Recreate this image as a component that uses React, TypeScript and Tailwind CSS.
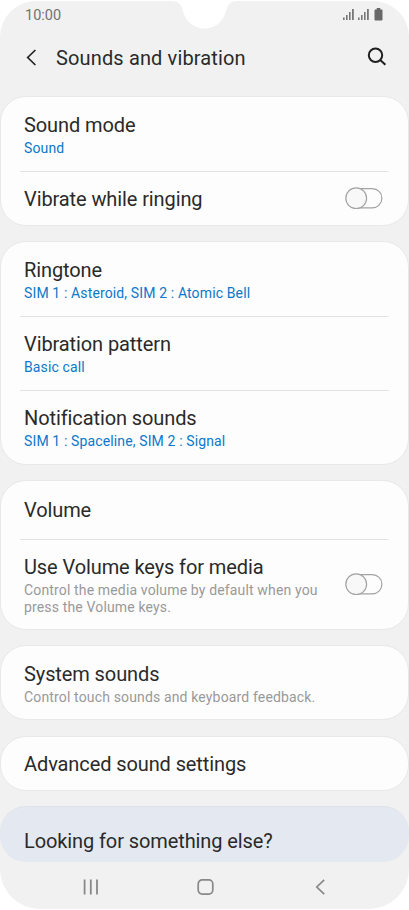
import React, { useState } from "react";

interface SettingRowProps {
    title: string;
    value?: string;
    description?: string;
    className: string;
    children?: React.ReactNode;
}

function SettingRow({ title, value, description, className, children }: SettingRowProps) {
    return (
        <div className={`flex justify-between pl-[23px] pr-[25px] ${className}`}>
            <div className="whitespace-nowrap">
                <h2 className="text-[20px] leading-6 tracking-[-0.1px] text-[#2a2a2a]">{title}</h2>
                {value && (
                    <p className="text-[14px] leading-[17px] tracking-[0.13px] mt-[3px] text-[#0b78cb]">{value}</p>
                )}
                {description && (
                    <p className="text-[14px] leading-[17px] tracking-[0.15px] mt-[3px] text-[#999999] whitespace-pre-line">
                        {description}
                    </p>
                )}
            </div>
            {children}
        </div>
    );
}

function Card({ className, children }: { className: string; children: React.ReactNode }) {
    return (
        <section className={`shrink-0 rounded-[26px] border border-[#e8e8e8] bg-[#fdfdfd] overflow-hidden ${className}`}>
            {children}
        </section>
    );
}

function Divider() {
    return <div className="h-px mx-[19px] bg-[#e3e3e3]" />;
}

function Toggle({ label }: { label: string }) {
    const [on, setOn] = useState(false);

    return (
        <button role="switch" aria-checked={on} aria-label={label} onClick={() => setOn(!on)} className="h-[22px]">
            <svg width="38" height="22" viewBox="0 0 38 22" fill="#fdfdfd" stroke="#a3a3a3" strokeWidth="1.2">
                <rect x="1.5" y="1.6" width="35.4" height="19.3" rx="9.65" />
                <circle cx={on ? 26.7 : 11.2} cy="11.2" r="10.4" fill="#f8f8f8" />
            </svg>
        </button>
    );
}

function Signal() {
    return (
        <svg width="11" height="12" viewBox="0 0 11 12" fill="#777777">
            <path d="M0 9.5h1.6V12H0zM3 7h1.6v5H3zM6 4h1.6v8H6zM9 1h1.8v11H9z" />
        </svg>
    );
}

function StatusBar() {
    return (
        <div className="relative h-[28px] shrink-0">
            {/* camera cutout */}
            <svg className="absolute left-[170px] top-0" width="69" height="28" viewBox="0 0 69 28" fill="#ffffff">
                <path d="M0 0C9 0 11 3 13 10C16 21 24 27.5 34.5 27.5C45 27.5 53 21 56 10C58 3 60 0 69 0Z" />
            </svg>
            <div className="flex justify-between pl-[25px] pr-[26px] pt-[6px]">
                <span className="text-[14.5px] leading-[17px] text-[#727272]">10:00</span>
                <div className="flex pt-px">
                    <Signal />
                    <span className="w-1" />
                    <Signal />
                    <svg className="ml-[5px]" width="9" height="13" viewBox="0 0 9 13" fill="#686868">
                        <path d="M2.7 0h3.6v1.4h1.3q.9 0 .9.9v9.3q0 .9-.9.9H1.4q-.9 0-.9-.9V2.3q0-.9.9-.9h1.3z" />
                    </svg>
                </div>
            </div>
        </div>
    );
}

function Header() {
    return (
        <header className="h-[67px] shrink-0 flex pl-[26px] pr-[22px]">
            <button aria-label="Back" className="h-5 mt-[18px]">
                <svg width="11" height="19" viewBox="0 0 11 19" fill="none" stroke="#252525" strokeWidth="1.7">
                    <path d="M9.4 2L1.7 9.5L9.4 17" />
                </svg>
            </button>
            <h1 className="ml-[19px] mt-[17px] text-[20px] leading-6 tracking-[0.14px] text-[#2a2a2a]">
                Sounds and vibration
            </h1>
            <button aria-label="Search" className="ml-auto h-5 mt-[18px]">
                <svg width="20" height="20" viewBox="0 0 20 20" fill="none" stroke="#202020" strokeWidth="2">
                    <circle cx="8.5" cy="8.2" r="6.7" />
                    <path d="M13.2 12.9L18.4 17.8" />
                </svg>
            </button>
        </header>
    );
}

function NavBar() {
    return (
        <nav className="flex items-center justify-between px-[83px] pt-[17px] text-[#888888]">
            <button aria-label="Recents">
                <svg width="15" height="16" viewBox="0 0 15 16" fill="none" stroke="currentColor" strokeWidth="1.8">
                    <path d="M1.6 .5v15M7.8 .5v15M14 .5v15" />
                </svg>
            </button>
            <button aria-label="Home" className="-ml-[3px]">
                <svg width="17" height="16" viewBox="0 0 17 16" fill="none" stroke="currentColor" strokeWidth="1.7">
                    <rect x="1.2" y=".9" width="14.6" height="14.2" rx="4" />
                </svg>
            </button>
            <button aria-label="Back">
                <svg width="11" height="16" viewBox="0 0 11 16" fill="none" stroke="currentColor" strokeWidth="1.7">
                    <path d="M9.2 .8L1.8 8L9.2 15.2" />
                </svg>
            </button>
        </nav>
    );
}

export default function App() {
    return (
        <div className="w-[409px] h-[910px] bg-white py-px font-[Roboto,sans-serif]">
            <div className="flex flex-col h-[908px] rounded-t-[36px] rounded-b-[40px] bg-[#f1f1f1] overflow-hidden">
                <StatusBar />
                <Header />

                <main className="flex flex-col shrink-0">
                    <Card className="h-[130px]">
                        <SettingRow title="Sound mode" value="Sound" className="h-[74px] pt-4" />
                        <Divider />
                        <SettingRow title="Vibrate while ringing" className="pt-[15px]">
                            <Toggle label="Vibrate while ringing" />
                        </SettingRow>
                    </Card>

                    <Card className="h-[224px] mt-[15px]">
                        <SettingRow title="Ringtone" value="SIM 1 : Asteroid, SIM 2 : Atomic Bell" className="h-[74px] pt-4" />
                        <Divider />
                        <SettingRow title="Vibration pattern" value="Basic call" className="h-[73px] pt-[15px]" />
                        <Divider />
                        <SettingRow title="Notification sounds" value="SIM 1 : Spaceline, SIM 2 : Signal" className="pt-[15px]" />
                    </Card>

                    <Card className="h-[150px] mt-[15px]">
                        <SettingRow title="Volume" className="h-[58px] pt-[17px]" />
                        <Divider />
                        <SettingRow
                            title="Use Volume keys for media"
                            description={"Control the media volume by default when you\npress the Volume keys."}
                            className="pt-[15px]"
                        >
                            <div className="pt-[18px]">
                                <Toggle label="Use Volume keys for media" />
                            </div>
                        </SettingRow>
                    </Card>

                    <Card className="h-[75px] mt-[15px]">
                        <SettingRow
                            title="System sounds"
                            description="Control touch sounds and keyboard feedback."
                            className="pt-4"
                        />
                    </Card>

                    <Card className="h-[55px] mt-4">
                        <SettingRow title="Advanced sound settings" className="pt-[15px]" />
                    </Card>

                    <section className="h-[56px] mt-[15px] px-px rounded-[26px] border-t border-[#dfe3e9] bg-[#e4e9f1]">
                        <SettingRow title="Looking for something else?" className="pt-[22px]" />
                    </section>
                </main>

                <NavBar />
            </div>
        </div>
    );
}
